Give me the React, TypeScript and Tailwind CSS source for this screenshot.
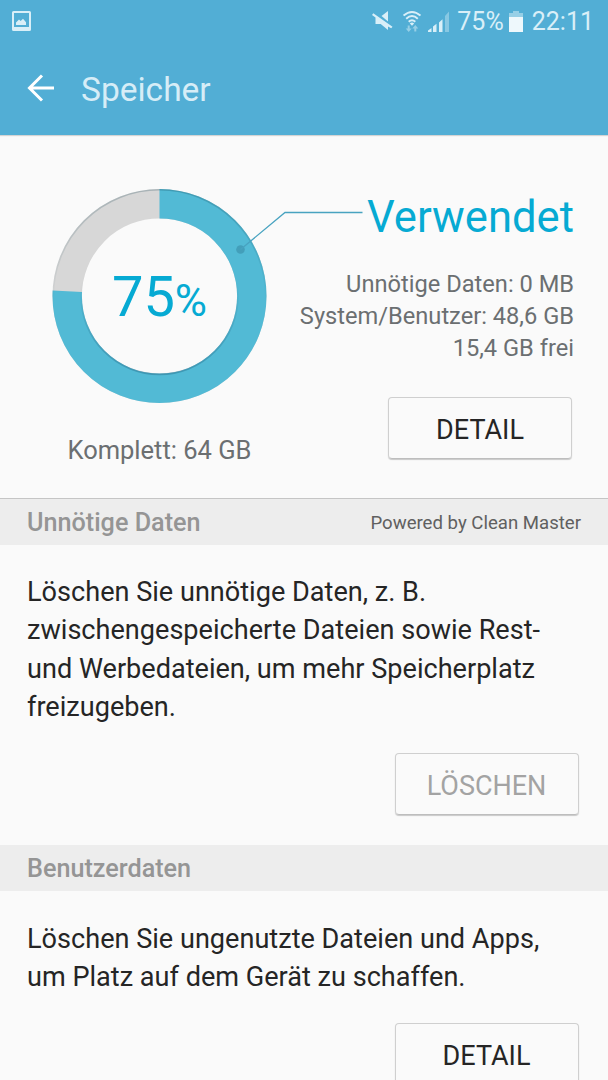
import type { ReactNode } from "react";

const RADIUS = 92.3;
const CIRCUMFERENCE = 2 * Math.PI * RADIUS;

function StatusBar() {
    return (
        <div className="flex h-[43px] items-center justify-between pl-3 pr-[14px] text-[#d9eff8]">
            <svg width="19" height="20" viewBox="0 0 19 20" className="mt-[-1px]">
                <path
                    fillRule="evenodd"
                    fill="currentColor"
                    d="M1.5 0h16a1.5 1.5 0 0 1 1.5 1.5v17a1.5 1.5 0 0 1-1.5 1.5h-16a1.5 1.5 0 0 1-1.5-1.5v-17a1.5 1.5 0 0 1 1.5-1.5zM2 2v14h15V2z"
                />
                <path fill="currentColor" d="M4 14v-2.5l3-3 1.7 1.6L11 7.8l3 3.5V14z" />
            </svg>
            <div className="flex items-center">
                {/* Sound off */}
                <svg width="21" height="20" viewBox="0 0 21 20" fill="currentColor" className="-mt-px">
                    <path d="M9.5 5L16 0v10.5z" />
                    <path d="M1.3 2.3L0 4l3.5 2.5v6.6h5.2L16 19v-3.6l3.2 1.9 1.3-1.6z" />
                </svg>
                {/* Wi-Fi with traffic arrows */}
                <svg width="18" height="21" viewBox="0 0 18 21" className="ml-[10px] -mt-px">
                    <g fill="none" stroke="currentColor" strokeWidth="1.9">
                        <path d="M.6 4.6Q9-2.6 17.4 4.6" />
                        <path d="M3.2 7.8Q9 2.4 14.8 7.8" />
                        <path d="M5.7 10.8Q9 7.6 12.3 10.8" />
                    </g>
                    <path fill="currentColor" d="M6.8 12.4q2.2-1.8 4.4 0L9 14.8z" />
                    <path fill="currentColor" opacity=".5" d="M4.7 14.5h2v3h2L5.7 21l-3-3.5h2zM11.3 20.5h2v-3h2l-3-3.5-3 3.5h2z" />
                </svg>
                {/* Signal strength */}
                <svg width="21" height="21" viewBox="0 0 21 21" fill="currentColor" className="ml-[7px] -mt-px">
                    <path d="M0 21v-1.5L3.5 17v4zM5 21v-5.500l3.500-2.700V21zM11 21V11.500l3.500-3.200V21z" />
                    <path d="M17 21V5l4-4.5V21z" opacity=".4" />
                </svg>
                <span className="ml-2 mt-px text-[25px] leading-[30px]">75%</span>
                <svg width="14" height="21" viewBox="0 0 14 21" className="-mt-px ml-[5px]">
                    <path fill="currentColor" opacity=".5" d="M4 0h6v2h4v5H0V2h4z" />
                    <path fill="#eef8fc" d="M0 6h14v15H0z" />
                </svg>
                <span className="ml-[9px] mt-px text-[25px] leading-[30px]">22:11</span>
            </div>
        </div>
    );
}

function UsageRing({ percent }: { percent: number }) {
    return (
        <div className="grid h-[215px] w-[215px] place-items-center">
            <svg width="215" height="215" viewBox="0 0 215 215" className="col-start-1 row-start-1">
                <defs>
                    <linearGradient id="outerShade" x1="0" y1="0" x2="0" y2="1">
                        <stop offset="0" stopColor="#003040" stopOpacity=".22" />
                        <stop offset=".55" stopColor="#003040" stopOpacity="0" />
                    </linearGradient>
                    <linearGradient id="innerShade" x1="0" y1="0" x2="0" y2="1">
                        <stop offset=".4" stopColor="#003050" stopOpacity="0" />
                        <stop offset="1" stopColor="#003050" stopOpacity=".25" />
                    </linearGradient>
                </defs>
                <circle cx="107.5" cy="107" r={RADIUS} fill="none" stroke="#d7d7d7" strokeWidth="29.4" />
                <circle
                    cx="107.5"
                    cy="107"
                    r={RADIUS}
                    fill="none"
                    stroke="#52bad5"
                    strokeWidth="29.4"
                    strokeDasharray={`${(CIRCUMFERENCE * percent) / 100} ${CIRCUMFERENCE}`}
                    transform="rotate(-90 107.5 107)"
                />
                <circle cx="107.5" cy="107" r="106.2" fill="none" stroke="url(#outerShade)" strokeWidth="1.6" />
                <circle cx="107.5" cy="107" r="78.4" fill="none" stroke="url(#innerShade)" strokeWidth="1.8" />
            </svg>
            <div className="col-start-1 row-start-1 whitespace-nowrap text-[56px] leading-none text-[#06aad3]">
                75<span className="text-[44px]">%</span>
            </div>
        </div>
    );
}

function Button({ children, disabled = false }: { children: ReactNode; disabled?: boolean }) {
    return (
        <button
            disabled={disabled}
            className="h-[62px] w-[184px] shrink-0 rounded-[4px] border border-[#cfcfcf] border-b-[#bdbdbd] pt-[4px] text-[27px] leading-[32px] text-[#252525] shadow-[0_1px_1px_rgba(0,0,0,0.2)] disabled:text-[#a3a3a3]"
        >
            {children}
        </button>
    );
}

function SectionHeader({ title, note }: { title: string; note?: string }) {
    return (
        <div className="flex h-[46px] items-center justify-between bg-[#ededed] px-[27px] pt-px">
            <h2 className="pt-px text-[25.2px] font-medium leading-[30px] text-[#959595]">{title}</h2>
            {note && <span className="text-[18.6px] leading-[24px] text-[#606060]">{note}</span>}
        </div>
    );
}

export default function App() {
    return (
        <div className="h-[1080px] w-[608px] overflow-hidden bg-[#fafafa] font-['Roboto',sans-serif]">
            <header className="h-[135px] bg-[#52aed5] shadow-[0_1px_1px_rgba(0,0,0,0.15)]">
                <StatusBar />
                <div className="flex h-[92px] items-center pl-[27px]">
                    <svg width="28" height="28" viewBox="0 0 28 28" fill="none" stroke="#fff" strokeWidth="3" className="-mt-[3px]">
                        <path d="M27 14H3M15 1.5L2.5 14 15 26.5" />
                    </svg>
                    <h1 className="ml-[26px] pt-[2px] text-[33.5px] leading-[40px] text-[#d6edf7]">Speicher</h1>
                </div>
            </header>

            <section className="relative flex h-[364px] justify-between border-b border-[#c5c5c5] pl-[52px] pr-[34px]">
                <div className="flex flex-col items-center pt-[54px]">
                    <UsageRing percent={75.7} />
                    <p className="mt-[31px] text-[25.5px] leading-[30px] text-[#6b6f71]">Komplett: 64 GB</p>
                </div>
                <div className="flex flex-col items-end pt-[57px]">
                    <h2 className="text-[43.6px] leading-[52px] text-[#06aad3]">Verwendet</h2>
                    <div className="mt-[24px] text-right text-[23.65px] leading-[32px] text-[#6b6f71]">
                        <p>Unnötige Daten: 0 MB</p>
                        <p>System/Benutzer: 48,6 GB</p>
                        <p>15,4 GB frei</p>
                    </div>
                    <div className="mr-[2px] mt-[33px] flex">
                        <Button>DETAIL</Button>
                    </div>
                </div>
                {/* Pointer from the ring to its label */}
                <svg width="128" height="46" viewBox="0 0 128 46" className="absolute left-[235px] top-[73px]" fill="none">
                    <circle cx="5.5" cy="41.5" r="4.3" fill="#439fba" />
                    <path d="M5.5 41.5L50 4.5h77.5" stroke="#48a3c0" strokeWidth="1.3" />
                </svg>
            </section>

            <SectionHeader title="Unnötige Daten" note="Powered by Clean Master" />
            <section className="flex h-[300px] flex-col pl-[27px] pr-[29.5px] pt-[28px]">
                <p className="text-[27.1px] leading-[38.3px] text-[#252525]">
                    Löschen Sie unnötige Daten, z. B.
                    <br />
                    zwischengespeicherte Dateien sowie Rest-
                    <br />
                    und Werbedateien, um mehr Speicherplatz
                    <br />
                    freizugeben.
                </p>
                <div className="mt-[26.5px] flex justify-end">
                    <Button disabled>LÖSCHEN</Button>
                </div>
            </section>

            <SectionHeader title="Benutzerdaten" />
            <section className="flex flex-col pl-[27px] pr-[29.5px] pt-[29px]">
                <p className="text-[27.1px] leading-[38.3px] text-[#252525]">
                    Löschen Sie ungenutzte Dateien und Apps,
                    <br />
                    um Platz auf dem Gerät zu schaffen.
                </p>
                <div className="mt-[26px] flex justify-end">
                    <Button>DETAIL</Button>
                </div>
            </section>
        </div>
    );
}
